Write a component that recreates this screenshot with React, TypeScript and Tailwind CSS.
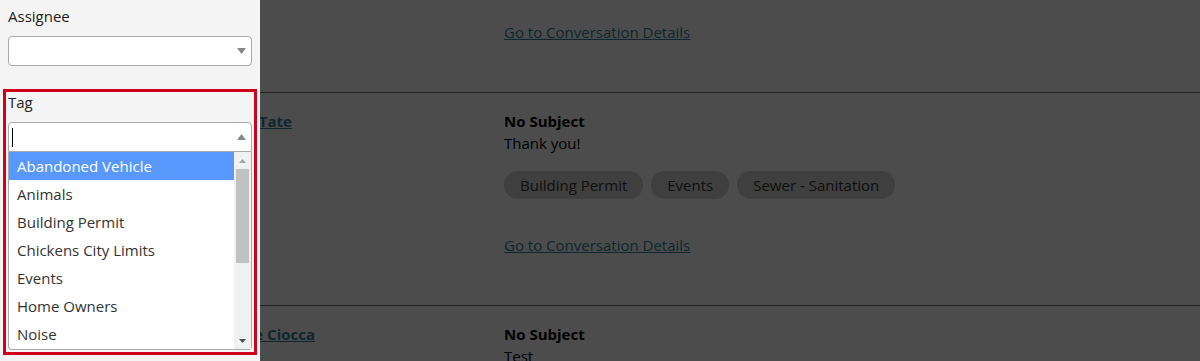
import React from "react";

type Row = {
  name?: string;
  subject?: string;
  message?: string;
  tags: string[];
};

// first row is scrolled up: only its link is still in view
const rows: Row[] = [
  { tags: [] },
  { name: "Anne Tate", subject: "No Subject", message: "Thank you!", tags: ["Building Permit", "Events", "Sewer - Sanitation"] },
  { name: "Janine Ciocca", subject: "No Subject", message: "Test", tags: [] },
];

const tagOptions = [
  "Abandoned Vehicle",
  "Animals",
  "Building Permit",
  "Chickens City Limits",
  "Events",
  "Home Owners",
  "Noise",
];

function Triangle({ dir, color }: { dir: "up" | "down"; color: string }) {
  return (
    <svg width="9" height="6" viewBox="0 0 9 6" className="shrink-0">
      <path d={dir === "down" ? "M0 0h9L4.5 6z" : "M0 6h9L4.5 0z"} fill={color} />
    </svg>
  );
}

function ConversationRow({ row }: { row: Row }) {
  if (!row.name) {
    return (
      <div className="grid grid-cols-[288px_1fr] border-b border-[#737373] pt-[21px] pb-[49px] leading-[22px]">
        <div />
        <a className="block text-[#327f9d] underline">Go to Conversation Details</a>
      </div>
    );
  }
  return (
    <div className="grid grid-cols-[288px_1fr] border-b border-[#737373] pt-[17px] pb-[49px]">
      <div>
        <a className="font-bold text-[#327f9d] underline leading-[22px]">{row.name}</a>
      </div>
      <div className="leading-[22px]">
        <div className="font-bold text-black">{row.subject}</div>
        <div className="text-black">{row.message}</div>
        {row.tags.length > 0 && (
          <>
            <div className="mt-[17px] flex h-[28px] gap-2">
              {row.tags.map((t) => (
                <span
                  key={t}
                  className="flex h-[28px] items-center rounded-full bg-[#d3d3d3] px-[16px] text-[#333]"
                >
                  {t}
                </span>
              ))}
            </div>
            <a className="mt-[35px] block text-[#327f9d] underline">Go to Conversation Details</a>
          </>
        )}
      </div>
    </div>
  );
}

export default function App() {
  return (
    <div className="relative h-[361px] w-[1200px] overflow-hidden bg-white text-[15px] font-['Open_Sans','Noto_Sans',sans-serif]">
      {/* page under the drawer */}
      <div className="pl-[216px]">
        {rows.map((r, i) => (
          <ConversationRow key={i} row={r} />
        ))}
      </div>

      {/* backdrop */}
      <div className="absolute inset-0 bg-black/70" />

      {/* filter drawer */}
      <aside className="absolute inset-y-0 left-0 w-[260px] bg-[#f4f4f4] text-[#222]">
        <div className="px-2 pt-[6px]">
          <label className="block leading-[20px]">Assignee</label>
          <div className="mt-[10px] flex h-[30px] items-center justify-end rounded-[4px] border border-[#aaa] bg-white pr-[5px]">
            <Triangle dir="down" color="#888" />
          </div>
        </div>

        <div className="ml-[3px] mt-[23px] w-[254px] border-[3px] border-[#d0021b] px-[2px] pb-[2px]">
          <label className="block leading-[20px]">Tag</label>
          <div className="mt-[10px] flex h-[30px] items-center justify-between rounded-t-[4px] border border-[#aaa] bg-white pl-[3px] pr-[5px]">
            <span className="h-[19px] w-px bg-black" />
            <Triangle dir="up" color="#888" />
          </div>
          <div className="flex h-[198px] rounded-b-[4px] border border-t-0 border-[#aaa] bg-white">
            <ul className="flex-1">
              {tagOptions.map((o, i) => (
                <li
                  key={o}
                  className={
                    i === 0
                      ? "flex h-[28px] items-center bg-[#5897fb] pl-[8px] text-white"
                      : "flex h-[28px] items-center pl-[8px] text-[#333]"
                  }
                >
                  {o}
                </li>
              ))}
            </ul>
            <div className="flex w-[17px] flex-col bg-[#f1f1f1]">
              <div className="flex h-[17px] items-center justify-center">
                <svg width="7" height="4" viewBox="0 0 7 4">
                  <path d="M0 4h7L3.5 0z" fill="#a3a3a3" />
                </svg>
              </div>
              <div className="mx-[2px] h-[94px] bg-[#c1c1c1]" />
              <div className="flex-1" />
              <div className="flex h-[17px] items-center justify-center">
                <svg width="7" height="4" viewBox="0 0 7 4">
                  <path d="M0 0h7L3.5 4z" fill="#505050" />
                </svg>
              </div>
            </div>
          </div>
        </div>
      </aside>
    </div>
  );
}
